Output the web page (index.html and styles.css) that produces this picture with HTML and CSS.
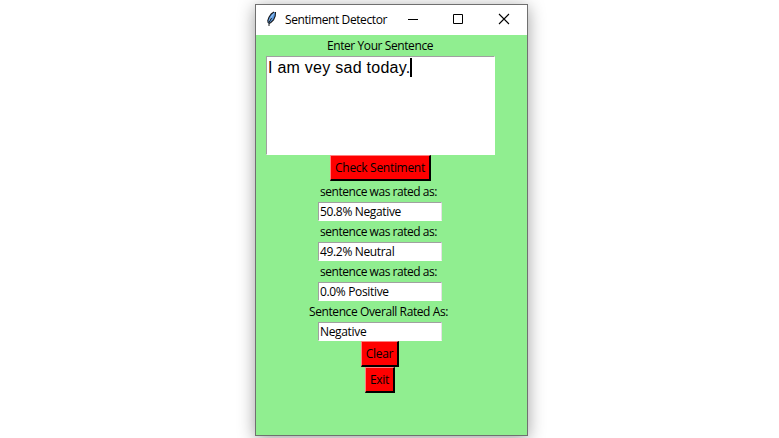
FILE: index.html
```html
<!DOCTYPE html>
<html lang="en">
<head>
<meta charset="utf-8">
<title>Sentiment Detector</title>
<link rel="stylesheet" href="styles.css">
</head>
<body>
<main class="window">
  <header class="titlebar">
    <svg class="feather" width="16" height="18" viewBox="0 0 16 18">
      <path d="M4.2 13.5L3.8 10.5 5 7.2 7.2 4 10 2 11.5 2 11.2 6 9.5 10 6.8 12.5Z" fill="#5b9ae0"/>
      <path d="M4.2 13L3.8 10.5 5 7.2 7.2 4 10 2M11.5 2L11.2 6 9.5 10 6.8 12.5 5 13.5" fill="none" stroke="#16181c" stroke-width="1.1"/>
      <path d="M9.8 3.4L7 7.5 5.3 11" fill="none" stroke="#9cc8f8" stroke-width="1"/>
      <path d="M7.5 8L5 12.5 5 16" fill="none" stroke="#16181c" stroke-width="1"/>
    </svg>
    <h1 class="title">Sentiment Detector</h1>
    <svg class="control" width="46" height="30" viewBox="0 0 46 30"><path d="M18 14.5H28" stroke="#000"/></svg>
    <svg class="control" width="45" height="30" viewBox="0 0 45 30"><path d="M17.5 9.5H26.5V18.5H17.5Z" fill="none" stroke="#000"/></svg>
    <svg class="control" width="46" height="30" viewBox="0 0 46 30"><path d="M18 9L28 19M28 9L18 19" stroke="#000" stroke-width="1.1"/></svg>
  </header>
  <section class="content">
    <div class="label prompt"><span>Enter Your Sentence</span></div>
    <div class="editor"><span class="typed">I am vey sad today.</span><span class="caret"></span></div>
    <div class="button check"><span>Check Sentiment</span></div>
    <div class="label rated"><span>sentence was rated as:</span></div>
    <div class="entry negative">50.8% Negative</div>
    <div class="label rated"><span>sentence was rated as:</span></div>
    <div class="entry neutral">49.2% Neutral</div>
    <div class="label rated"><span>sentence was rated as:</span></div>
    <div class="entry positive">0.0% Positive</div>
    <div class="label overall"><span>Sentence Overall Rated As:</span></div>
    <div class="entry result">Negative</div>
    <div class="button clear"><span>Clear</span></div>
    <div class="button exit"><span>Exit</span></div>
  </section>
</main>
</body>
</html>
```
FILE: styles.css
```css
* { box-sizing: border-box; }
body {
  margin: 0;
  height: 438px;
  overflow: hidden;
  background: #fff;
  color: #000;
  font: 12px/20px "Open Sans", "Noto Sans", sans-serif;
}
.window {
  width: 273px;
  height: 432px;
  margin: 4px 0 0 255px;
  border: 1px solid #707070;
  background: #90ee90;
  box-shadow: 0 3px 16px rgba(0, 0, 0, .38);
}
.titlebar {
  display: flex;
  height: 30px;
  padding-left: 8px;
  background: #fff;
}
.feather { margin: 5px 5px 0 0; flex: none; }
.title {
  width: 105px;
  margin: 0;
  font-size: 12px;
  font-weight: 400;
  line-height: 29px;
  letter-spacing: -.4px;
  white-space: nowrap;
}
.control { flex: none; }
.content {
  display: flex;
  flex-direction: column;
  align-items: center;
  width: 229px;
  margin-left: 10px;
  padding-top: 1px;
  white-space: nowrap;
}
.label { height: 20px; line-height: 19px; }
.prompt { padding-right: 1px; letter-spacing: -.41px; }
.rated { margin-top: 1px; padding-right: 4px; letter-spacing: -.46px; }
.overall { margin-top: 1px; padding-right: 4px; letter-spacing: -.4px; }
.editor {
  display: flex;
  width: 229px;
  height: 99px;
  padding: 1px;
  border: 1px solid #a0a0a0;
  border-right-color: #fff;
  border-bottom-color: #fff;
  background: #fff;
  font: 16px/20px "Liberation Sans", Arial, sans-serif;
  letter-spacing: .26px;
}
.caret { width: 2px; height: 19px; margin-left: -1px; background: #000; }
.entry {
  width: 124px;
  height: 19px;
  margin-right: 1px;
  padding-left: 1px;
  border: 1px solid #a0a0a0;
  border-right-color: #e3e3e3;
  border-bottom-color: #fff;
  background: #fff;
  line-height: 18px;
  letter-spacing: -.34px;
}
.button {
  height: 26px;
  border: 1px solid #ff8080;
  border-right: 2px solid #000;
  border-bottom: 2px solid #000;
  background: #f00;
  line-height: 24px;
  text-align: center;
}
.check { width: 101px; margin-bottom: 1px; letter-spacing: -.3px; }
.rated:nth-of-type(4) { margin-top: 0; }
.clear { width: 38px; margin-right: 1px; letter-spacing: -.3px; }
.exit { width: 30px; margin-right: 1px; letter-spacing: -.3px; }
```
